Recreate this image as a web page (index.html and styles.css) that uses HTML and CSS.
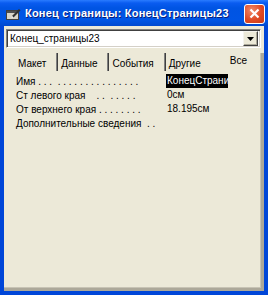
FILE: index.html
```html
<!DOCTYPE html>
<html>
<head>
<meta charset="utf-8">
<link rel="stylesheet" href="styles.css">
</head>
<body>
<div class="window">
  <div class="titlebar">
    <svg class="ticon" width="15" height="12" viewBox="0 0 15 12">
      <rect x="0.5" y="2.5" width="12" height="9" fill="#d8d4c8" stroke="#404040"/>
      <rect x="1" y="3" width="11" height="2" fill="#505050"/>
      <path d="M6 8 L13 1 L14.5 2.5 L7.5 9.5 Z" fill="#303030"/>
      <path d="M6 8 L7.5 9.5 L5.5 10 Z" fill="#f0f0f0"/>
    </svg>
    <span class="title">Конец страницы: КонецСтраницы23</span>
    <div class="close">
      <svg width="11" height="11" viewBox="0 0 11 11"><path d="M1.5 1.5 L9.5 9.5 M9.5 1.5 L1.5 9.5" stroke="#fff" stroke-width="2.2"/></svg>
    </div>
  </div>
  <div class="frame">
    <div class="combo">
      <span class="combo-text">Конец_страницы23</span>
      <div class="combo-btn">
        <svg width="7" height="4" viewBox="0 0 7 4"><path d="M0 0 H7 L3.5 4 Z" fill="#000"/></svg>
      </div>
    </div>
    <div class="sheet">
      <div class="tabs">
        <span class="tab t1">Макет</span>
        <span class="sep"></span>
        <span class="tab t2">Данные</span>
        <span class="sep"></span>
        <span class="tab t3">События</span>
        <span class="sep"></span>
        <span class="tab t4">Другие</span>
        <span class="tab all">Все</span>
      </div>
      <div class="rows">
        <div class="row"><span class="label">Имя . . . &nbsp;. . . . . . . . . . . . . . .</span><span class="value sel">КонецСтрани</span></div>
        <div class="row"><span class="label">Ст левого края &nbsp; &nbsp;. . &nbsp;. . . . .</span><span class="value">0см</span></div>
        <div class="row"><span class="label">От верхнего края . . . . . . . .</span><span class="value">18.195см</span></div>
        <div class="row"><span class="label">Дополнительные сведения &nbsp;. .</span><span class="value"></span></div>
      </div>
    </div>
  </div>
</div>
</body>
</html>
```
FILE: styles.css
```css
html, body {
  margin: 0;
  padding: 0;
  background: #0046d8;
}
body {
  width: 268px;
  height: 295px;
  overflow: hidden;
  font-family: "Liberation Sans", Arial, sans-serif;
  font-size: 10px;
  color: #000;
}
.window {
  width: 268px;
  height: 295px;
  display: flex;
  flex-direction: column;
  background: #0046d8;
}
.titlebar {
  height: 26px;
  flex: none;
  display: flex;
  align-items: center;
  background: linear-gradient(#2a7cff 0px, #0a5cf0 3px, #0054e3 8px, #0055e5 20px, #0049d0 26px);
  padding: 0 3px 0 6px;
  box-sizing: border-box;
}
.ticon {
  flex: none;
  margin-right: 4px;
  margin-top: 1px;
}
.title {
  flex: 1;
  color: #fff;
  font-weight: bold;
  font-size: 11px;
  letter-spacing: 0.2px;
  text-shadow: 1px 1px 0 #0a1e7a;
  white-space: nowrap;
  overflow: hidden;
}
.close {
  flex: none;
  width: 21px;
  height: 20px;
  box-sizing: border-box;
  border: 1px solid #fff;
  border-radius: 3px;
  background: radial-gradient(circle at 35% 30%, #f08a6a, #e04a24 55%, #c43a18);
  display: flex;
  align-items: center;
  justify-content: center;
  margin-top: 1px;
}
.frame {
  flex: 1;
  display: flex;
  flex-direction: column;
  background: #ece9d8;
  margin: 0 4px 4px 4px;
  min-height: 0;
}
.combo {
  flex: none;
  margin: 3px 3px 0 2px;
  height: 19px;
  box-sizing: border-box;
  background: #fff;
  border-top: 1px solid #808080;
  border-left: 1px solid #808080;
  border-right: 1px solid #fff;
  border-bottom: 1px solid #fff;
  box-shadow: inset 1px 1px 0 #404040, inset -1px -1px 0 #d4d0c8;
  display: flex;
  align-items: center;
  padding: 2px 2px 2px 3px;
}
.combo-text {
  flex: 1;
  white-space: nowrap;
}
.combo-btn {
  flex: none;
  width: 15px;
  height: 15px;
  box-sizing: border-box;
  background: #ece9d8;
  border-top: 1px solid #f4f3ee;
  border-left: 1px solid #f4f3ee;
  border-right: 1px solid #404040;
  border-bottom: 1px solid #404040;
  box-shadow: inset -1px -1px 0 #aca899;
  display: flex;
  align-items: center;
  justify-content: center;
}
.sheet {
  flex: 1;
  margin-top: 5px;
  border-right: 3px solid #aca899;
  border-bottom: 3px solid #aca899;
  box-shadow: inset -1px -1px 0 #c7c3b4;
  display: flex;
  flex-direction: column;
}
.tabs {
  display: flex;
  align-items: center;
  height: 18px;
  padding-left: 14px;
}
.tab {
  padding-top: 3px;
  white-space: nowrap;
}
.tab + .sep {
  margin-left: 10px;
}
.sep {
  flex: none;
  width: 1px;
  height: 18px;
  background: #404040;
  border-left: 1px solid #808080;
  margin-right: 3px;
}
.tab.all {
  margin-left: 29px;
  padding-top: 0;
  margin-top: -4px;
}
.rows {
  margin-top: 3px;
  display: flex;
  flex-direction: column;
}
.row {
  height: 14px;
  display: flex;
  align-items: center;
}
.label {
  width: 162px;
  box-sizing: border-box;
  padding-left: 12px;
  white-space: nowrap;
  overflow: hidden;
  flex: none;
}
.value {
  padding-left: 1px;
  height: 14px;
  line-height: 14px;
  white-space: nowrap;
}
.value.sel {
  background: #000;
  color: #fff;
  width: 61px;
  overflow: hidden;
}
```
